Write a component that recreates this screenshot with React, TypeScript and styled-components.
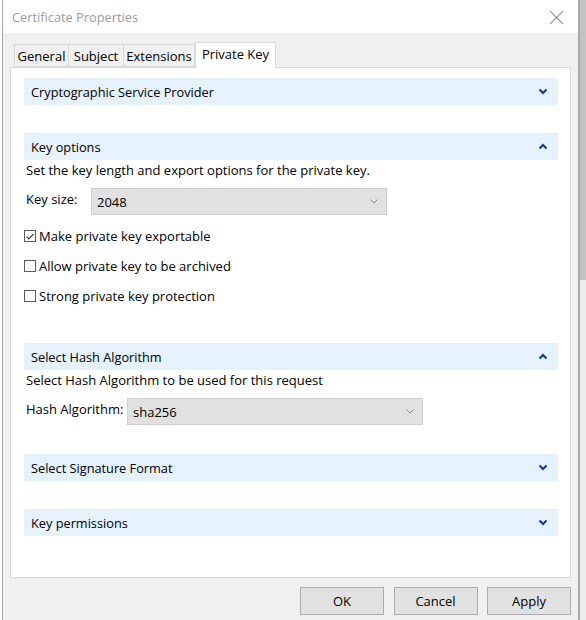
import { FC } from "react";
import styled, { createGlobalStyle } from "styled-components";

const GlobalStyle = createGlobalStyle`
  html, body {
    margin: 0;
    padding: 0;
    background: #ffffff;
  }
  body {
    font-family: "Open Sans", "Noto Sans", "Liberation Sans", sans-serif;
    font-size: 13px;
    color: #000000;
  }
`;

const ChevronIcon: FC<{ up?: boolean }> = ({ up }) => (
  <svg width="10" height="7" viewBox="0 0 10 7">
    <polyline
      points={up ? "1.5,5.5 5,2 8.5,5.5" : "1.5,1.5 5,5 8.5,1.5"}
      fill="none"
      stroke="#1b3f94"
      strokeWidth="2.2"
    />
  </svg>
);

const SelectArrow: FC = () => (
  <svg width="8" height="5" viewBox="0 0 8 5">
    <polyline points="0.5,0.5 4,4 7.5,0.5" fill="none" stroke="#8a8a8a" strokeWidth="1" />
  </svg>
);

const CloseIcon: FC = () => (
  <svg width="15" height="15" viewBox="0 0 15 15">
    <path d="M1 1 L14 14 M14 1 L1 14" stroke="#9a9a9a" strokeWidth="1.1" />
  </svg>
);

const CheckMark: FC = () => (
  <svg width="11" height="11" viewBox="0 0 11 11">
    <polyline points="1.8,5.6 4.3,8.2 9.4,2.6" fill="none" stroke="#333333" strokeWidth="1.2" />
  </svg>
);

const Section: FC<{ title: string; open?: boolean }> = ({ title, open }) => (
  <SectionHeader>
    <span>{title}</span>
    <ChevronIcon up={open} />
  </SectionHeader>
);

const Check: FC<{ label: string; checked?: boolean }> = ({ label, checked }) => (
  <CheckRow>
    <CheckBox>{checked && <CheckMark />}</CheckBox>
    <span>{label}</span>
  </CheckRow>
);

export default function App() {
  return (
    <>
      <GlobalStyle />
      <Screen>
        <Window>
          <TitleBar>
            <Title>Certificate Properties</Title>
            <CloseButton>
              <CloseIcon />
            </CloseButton>
          </TitleBar>
          <Body>
            <TabStrip>
              <Tab $width={55}>General</Tab>
              <Tab $width={56}>Subject</Tab>
              <Tab $width={72}>Extensions</Tab>
              <Tab $width={81} $active>
                Private Key
              </Tab>
            </TabStrip>
            <Panel>
              <Section title="Cryptographic Service Provider" />
              <Group $top={28}>
                <Section title="Key options" open />
                <Description>Set the key length and export options for the private key.</Description>
                <FieldRow>
                  <FieldLabel $width={65}>Key size:</FieldLabel>
                  <Select>
                    <span>2048</span>
                    <SelectArrow />
                  </Select>
                </FieldRow>
                <Checks>
                  <Check label="Make private key exportable" checked />
                  <Check label="Allow private key to be archived" />
                  <Check label="Strong private key protection" />
                </Checks>
              </Group>
              <Group $top={37}>
                <Section title="Select Hash Algorithm" open />
                <Description>Select Hash Algorithm to be used for this request</Description>
                <FieldRow>
                  <FieldLabel $width={101}>Hash Algorithm:</FieldLabel>
                  <Select>
                    <span>sha256</span>
                    <SelectArrow />
                  </Select>
                </FieldRow>
              </Group>
              <Group $top={29}>
                <Section title="Select Signature Format" />
              </Group>
              <Group $top={28}>
                <Section title="Key permissions" />
              </Group>
            </Panel>
            <ButtonRow>
              <Button>OK</Button>
              <Button>Cancel</Button>
              <Button>Apply</Button>
            </ButtonRow>
          </Body>
        </Window>
        <ScrollStrip>
          <ScrollThumb />
        </ScrollStrip>
      </Screen>
    </>
  );
}

const Screen = styled.div`
  display: flex;
  width: 586px;
  height: 620px;
  overflow: hidden;
`;

const Window = styled.div`
  display: flex;
  flex-direction: column;
  width: 577px;
  margin-left: 2px;
  border-left: 1px solid #a8a8a8;
  background: #f0f0f0;
`;

const TitleBar = styled.div`
  display: flex;
  align-items: center;
  justify-content: space-between;
  height: 33px;
  padding: 1px 14px 0 9px;
  box-sizing: border-box;
  background: #ffffff;
`;

const Title = styled.div`
  font-size: 12.8px;
  color: #9b9b9b;
`;

const CloseButton = styled.div`
  display: flex;
  align-items: center;
`;

const Body = styled.div`
  display: flex;
  flex-direction: column;
  flex: 1;
  padding: 0 7px;
`;

const TabStrip = styled.div`
  display: flex;
  align-items: flex-end;
  height: 34px;
  padding-left: 5px;
`;

const Tab = styled.div<{ $width: number; $active?: boolean }>`
  display: flex;
  align-items: center;
  justify-content: center;
  box-sizing: border-box;
  width: ${(p) => p.$width}px;
  height: ${(p) => (p.$active ? 26 : 23)}px;
  margin-bottom: ${(p) => (p.$active ? -1 : 0)}px;
  padding-bottom: ${(p) => (p.$active ? 3 : 0)}px;
  background: ${(p) => (p.$active ? "#ffffff" : "#f0f0f0")};
  border: 1px solid #d9d9d9;
  border-bottom: ${(p) => (p.$active ? "none" : "1px solid #d9d9d9")};
  margin-left: ${(p) => (p.$active ? 0 : -1)}px;
  position: relative;
  z-index: ${(p) => (p.$active ? 1 : 0)};
  font-size: 13px;
  white-space: nowrap;
`;

const Panel = styled.div`
  box-sizing: border-box;
  height: 511px;
  padding: 10px 12px 0 13px;
  background: #ffffff;
  border: 1px solid #d9d9d9;
`;

const Group = styled.div<{ $top: number }>`
  margin-top: ${(p) => p.$top}px;
`;

const SectionHeader = styled.div`
  display: flex;
  align-items: center;
  justify-content: space-between;
  height: 27px;
  padding: 0 10px 0 7px;
  background: #e5f1fb;
  font-size: 12.75px;
`;

const Description = styled.div`
  height: 20px;
  line-height: 20px;
  padding-left: 2px;
`;

const FieldRow = styled.div`
  display: flex;
  align-items: center;
  margin-top: 8px;
`;

const FieldLabel = styled.div<{ $width: number }>`
  width: ${(p) => p.$width}px;
  padding-left: 2px;
  margin-top: -6px;
  white-space: nowrap;
`;

const Select = styled.div`
  display: flex;
  align-items: center;
  justify-content: space-between;
  box-sizing: border-box;
  width: 296px;
  height: 27px;
  padding: 0 8px 0 5px;
  background: #e1e1e1;
  border: 1px solid #cfcfcf;
`;

const Checks = styled.div`
  display: flex;
  flex-direction: column;
  gap: 10px;
  margin-top: 11px;
`;

const CheckRow = styled.div`
  display: flex;
  align-items: center;
  height: 20px;
  gap: 3px;
`;

const CheckBox = styled.div`
  display: flex;
  align-items: center;
  justify-content: center;
  box-sizing: border-box;
  width: 12px;
  height: 12px;
  border: 1px solid #5a5a5a;
  background: #ffffff;
`;

const ButtonRow = styled.div`
  display: flex;
  justify-content: flex-end;
  gap: 9.5px;
  padding-top: 9px;
`;

const Button = styled.div`
  display: flex;
  align-items: center;
  justify-content: center;
  box-sizing: border-box;
  width: 84px;
  height: 28px;
  background: #e1e1e1;
  border: 1px solid #adadad;
  font-size: 13px;
`;

const ScrollStrip = styled.div`
  display: flex;
  flex-direction: column;
  width: 6px;
  border-left: 2px solid #a9a9a9;
  background: #ececec;
`;

const ScrollThumb = styled.div`
  height: 280px;
  background: #c2c2c2;
`;
